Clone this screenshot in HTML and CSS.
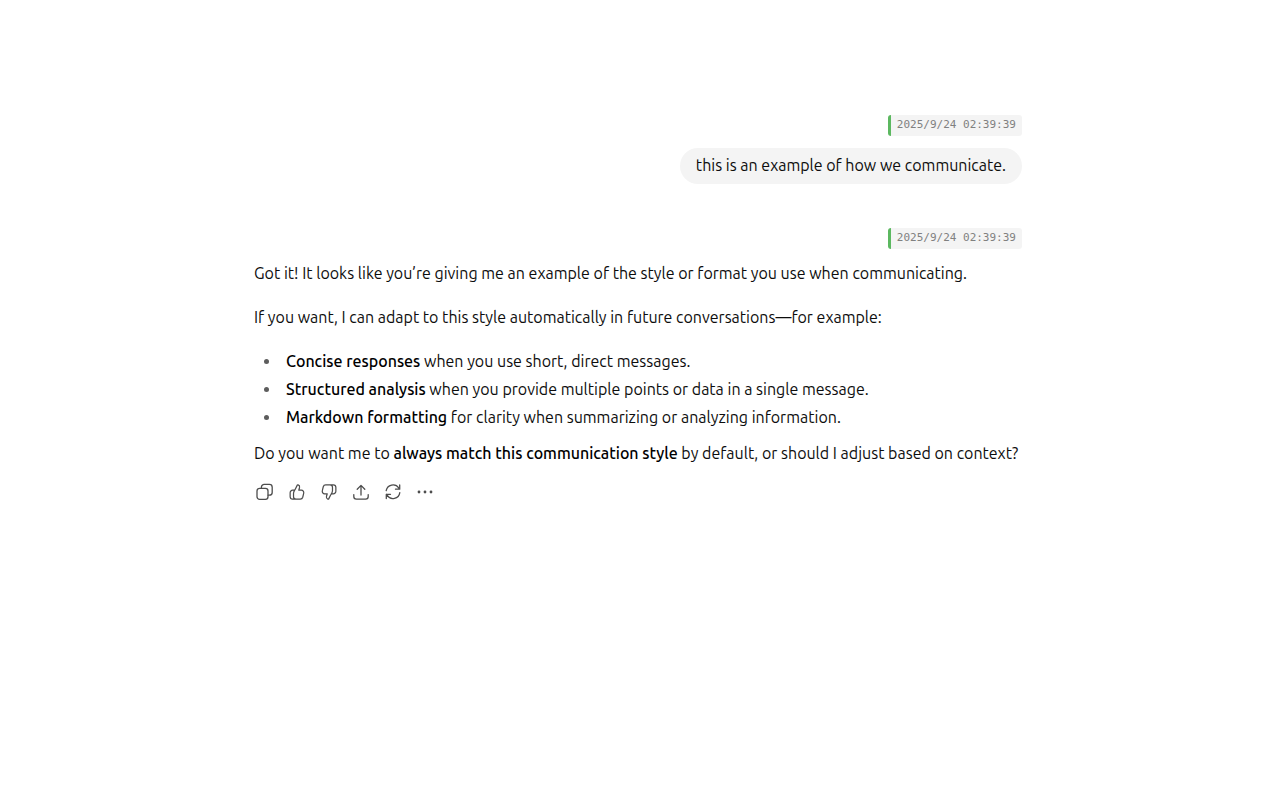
FILE: index.html
```html
<!DOCTYPE html>
<html lang="en">
<head>
<meta charset="utf-8">
<meta name="viewport" content="width=device-width, initial-scale=1">
<title>Conversation</title>
<link rel="stylesheet" href="styles.css">
</head>
<body>
<main class="thread">
  <article class="turn turn-user">
    <time class="stamp" datetime="2025-09-24T02:39:39">2025/9/24 02:39:39</time>
    <p class="bubble">this is an example of how we communicate.</p>
  </article>
  <article class="turn">
    <time class="stamp" datetime="2025-09-24T02:39:39">2025/9/24 02:39:39</time>
    <div class="reply">
      <p>Got it! It looks like you’re giving me an example of the style or format you use when communicating.</p>
      <p>If you want, I can adapt to this style automatically in future conversations—for example:</p>
      <ul>
        <li><strong>Concise responses</strong> when you use short, direct messages.</li>
        <li><strong>Structured analysis</strong> when you provide multiple points or data in a single message.</li>
        <li><strong>Markdown formatting</strong> for clarity when summarizing or analyzing information.</li>
      </ul>
      <p>Do you want me to <strong>always match this communication style</strong> by default, or should I adjust based on context?</p>
    </div>
    <div class="actions">
      <button type="button" aria-label="Copy"><svg viewBox="0 0 20 20"><rect x="2" y="6.3" width="11" height="11" rx="2.6"/><path d="M6.4 6.2V5.2a2.8 2.8 0 0 1 2.8-2.8h5.2a2.8 2.8 0 0 1 2.8 2.8v5.2a2.8 2.8 0 0 1-2.8 2.8h-1.2"/></svg></button>
      <button type="button" aria-label="Good response"><svg viewBox="0 0 20 20"><path id="thumb" transform="translate(.6 .6) scale(.94)" d="M8.9 17.6H5.4A2.7 2.7 0 0 1 2.7 15v-4.2a2.7 2.7 0 0 1 2.7-2.7h1.4c.5 0 1-.3 1.2-.8l2.3-4.6c.2-.4.6-.5 1-.3 1.2.5 1.7 1.6 1.4 2.8l-.8 2.9h2.7a2.6 2.6 0 0 1 2.5 3.3l-1 4.2a2.7 2.7 0 0 1-2.6 2H8.9a2.6 2.6 0 0 1-2.6-2.6v-3.6c0-1.2.5-2.4 1.4-3.7"/></svg></button>
      <button type="button" aria-label="Bad response"><svg viewBox="0 0 20 20"><use href="#thumb" transform="rotate(180 10 10)"/></svg></button>
      <button type="button" aria-label="Share"><svg viewBox="0 0 20 20"><path d="M10 13V3.5M6.2 7.2 10 3.4l3.8 3.8M2.8 12.6v1.9a2.6 2.6 0 0 0 2.6 2.6h9.2a2.6 2.6 0 0 0 2.6-2.6v-1.9"/></svg></button>
      <button type="button" aria-label="Try again"><svg viewBox="0 0 20 20"><path d="M3.2 8.7A6.9 6.9 0 0 1 15.8 6l.8 1.1M16.7 3v4.2h-4.2M16.8 10.6A6.9 6.9 0 0 1 4.2 13.4l-.8-1.1M3.3 16.5v-4.2h4.2"/></svg></button>
      <button type="button" aria-label="More actions"><svg class="dots" viewBox="0 0 20 20"><circle cx="4" cy="10" r="1.4"/><circle cx="10" cy="10" r="1.4"/><circle cx="16" cy="10" r="1.4"/></svg></button>
    </div>
  </article>
</main>
</body>
</html>
```
FILE: styles.css
```css
* {
  box-sizing: border-box;
}

body {
  margin: 0;
  padding: 115px 20px 40px 16px;
  background: #fff;
  color: #0d0d0d;
  font: 16px/28px Ubuntu, Roboto, sans-serif;
}

p,
ul {
  margin: 0;
}

.thread {
  display: flex;
  flex-direction: column;
  gap: 44px;
  max-width: 768px;
  margin: 0 auto;
}

.turn {
  display: flex;
  flex-direction: column;
  align-items: stretch;
}

.stamp {
  align-self: flex-end;
  padding: 1px 6px 3px;
  border-left: 3px solid #5cb860;
  border-radius: 3px;
  background: #f4f4f4;
  color: #808080;
  font: 11px/17px "DejaVu Sans Mono", monospace;
}

.bubble {
  align-self: flex-end;
  margin-top: 12px;
  padding: 5px 16px 7px;
  border-radius: 18px;
  background: #f4f4f4;
  line-height: 24px;
}

.reply {
  display: flex;
  flex-direction: column;
  margin-top: 10px;
}

.reply p + p,
.reply ul {
  margin-top: 16px;
}

.reply ul {
  margin-bottom: 8px;
  padding-left: 27px;
}

.reply li {
  padding-left: 5px;
}

.reply li::marker {
  color: #5d5d5d;
}

strong {
  font-weight: 550;
  color: #000;
}

.actions {
  display: flex;
  margin: 9px 0 0 -5px;
}

.actions button {
  width: 32px;
  height: 32px;
  padding: 6px;
  border: 0;
  border-radius: 8px;
  background: none;
  color: #4d4d4d;
  cursor: pointer;
}

.actions button:hover {
  background: #f4f4f4;
}

.actions svg {
  display: block;
  width: 20px;
  height: 20px;
  fill: none;
  stroke: currentColor;
  stroke-width: 1.3;
  stroke-linecap: round;
  stroke-linejoin: round;
}

.actions .dots {
  fill: currentColor;
  stroke: none;
}
```
